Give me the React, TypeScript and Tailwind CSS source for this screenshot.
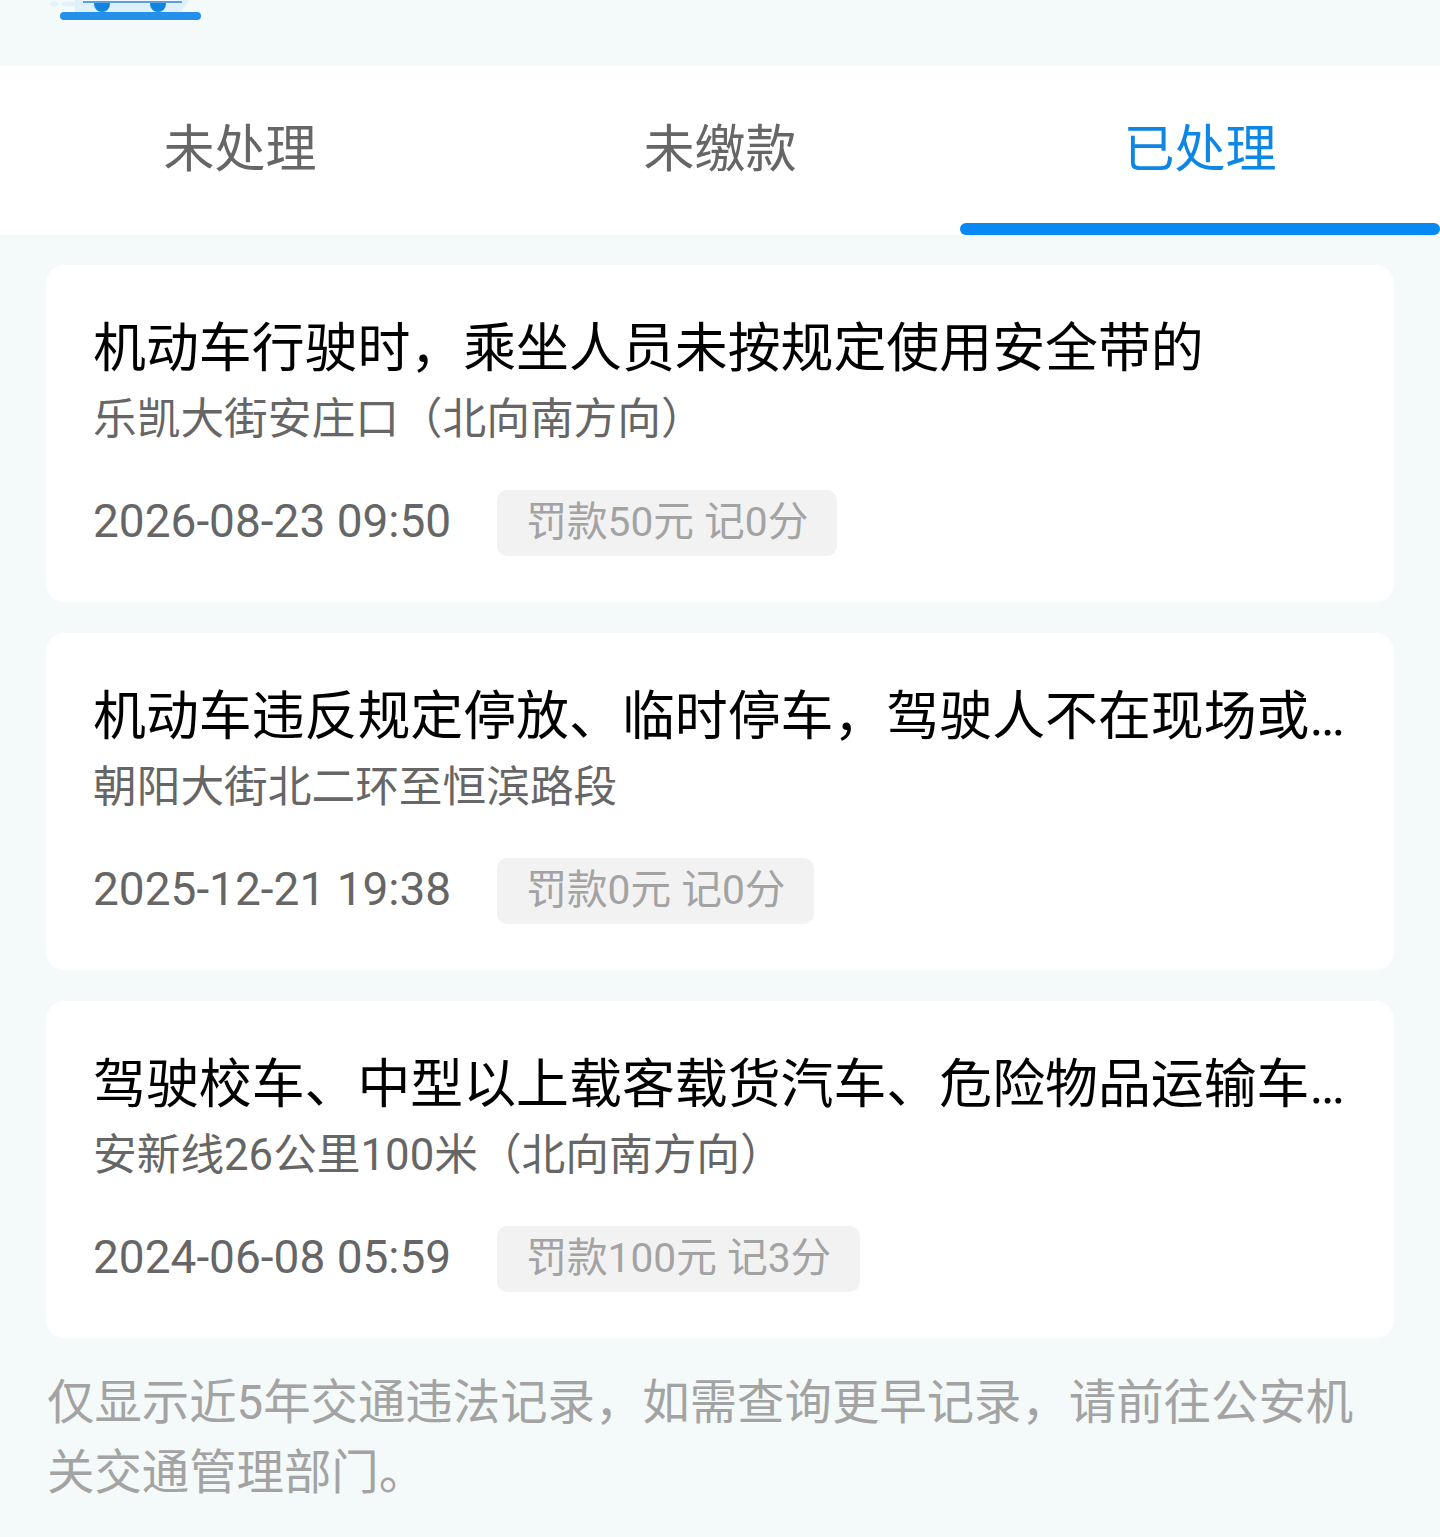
const FONT = "font-['Roboto','Noto_Sans_CJK_SC',sans-serif]";

const records = [
  {
    title: "机动车行驶时，乘坐人员未按规定使用安全带的",
    place: "乐凯大街安庄口（北向南方向）",
    time: "2026-08-23 09:50",
    fine: "罚款50元 记0分",
  },
  {
    title: "机动车违反规定停放、临时停车，驾驶人不在现场或…",
    place: "朝阳大街北二环至恒滨路段",
    time: "2025-12-21 19:38",
    fine: "罚款0元 记0分",
  },
  {
    title: "驾驶校车、中型以上载客载货汽车、危险物品运输车…",
    place: "安新线26公里100米（北向南方向）",
    time: "2024-06-08 05:59",
    fine: "罚款100元 记3分",
  },
];

function TruckBanner() {
  return (
    <svg width="300" height="22" viewBox="0 0 300 22" className="block">
      <ellipse cx="54" cy="4" rx="4" ry="2.5" fill="#e3f1fb" />
      <ellipse cx="70" cy="4" rx="9" ry="2.5" fill="#e3f1fb" />
      <path d="M75 0H189L181 12H75Z" fill="#dff0fd" />
      <circle cx="102" cy="4" r="8" fill="#0f85e0" />
      <circle cx="158" cy="4" r="8" fill="#0f85e0" />
      <rect x="83" y="0" width="99" height="1" fill="#f2f9ff" />
      <rect x="83" y="1" width="99" height="2" fill="#5b9fe0" />
      <rect x="60" y="12" width="141" height="8" rx="4" fill="#2490ea" />
    </svg>
  );
}

export default function App() {
  return (
    <div className={`w-[1440px] h-[1537px] overflow-hidden bg-[#f4f9f9] ${FONT}`}>
      <div className="h-[66px]">
        <TruckBanner />
      </div>

      <div className="h-[169px] bg-white flex">
        {["未处理", "未缴款", "已处理"].map((tab, i) => (
          <div key={tab} className="relative flex-1 flex justify-center pt-[54px]">
            <span className={`text-[51px] leading-[60px] ${i === 2 ? "text-[#0e87e4]" : "text-[#666666]"}`}>{tab}</span>
            {i === 2 && <div className="absolute left-0 right-0 bottom-0 h-3 rounded-full bg-[#0688f5]" />}
          </div>
        ))}
      </div>

      <div className="px-[46px] pt-[30px] flex flex-col gap-[31px]">
        {records.map((r) => (
          <div key={r.time} className="h-[337px] bg-white rounded-[18px] pl-[47px] pt-[53px]">
            <div className="text-[52.9px] leading-[62px] text-black whitespace-nowrap">{r.title}</div>
            <div className="mt-[13px] text-[43.7px] leading-[52px] text-[#666666]">{r.place}</div>
            <div className="mt-[45px] flex items-center gap-[46px]">
              <span className="mb-1 text-[46px] leading-[54px] text-[#666666]">{r.time}</span>
              <span className="h-[66px] px-[29px] flex items-center rounded-[10px] bg-[#f2f2f2] text-[40.7px] text-[#a3a3a3]">
                {r.fine}
              </span>
            </div>
          </div>
        ))}
      </div>

      <p className="mt-[30px] px-[47px] text-[47.4px] leading-[70px] text-[#a3a3a3]">
        仅显示近5年交通违法记录，如需查询更早记录，请前往公安机关交通管理部门。
      </p>
    </div>
  );
}
